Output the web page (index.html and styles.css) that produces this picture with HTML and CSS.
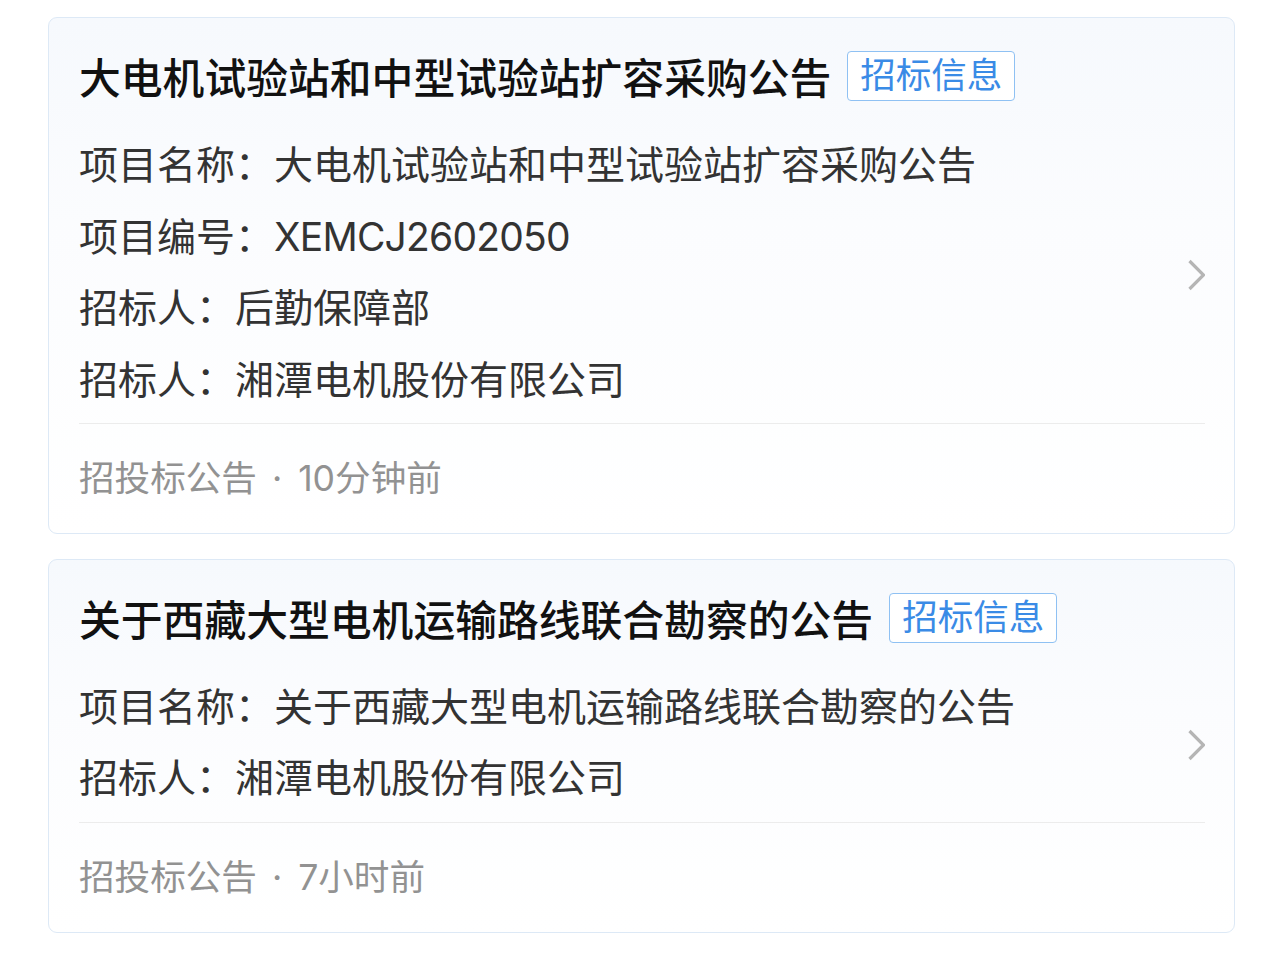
FILE: index.html
```html
<!DOCTYPE html>
<html lang="zh-CN">
<head>
<meta charset="utf-8">
<title>招投标公告</title>
<link rel="stylesheet" href="styles.css">
</head>
<body>
<div class="list">
  <div class="card">
    <div class="title-row">
      <span class="title">大电机试验站和中型试验站扩容采购公告</span>
      <span class="tag">招标信息</span>
    </div>
    <div class="body">
      <div class="rows">
        <div class="row">项目名称：大电机试验站和中型试验站扩容采购公告</div>
        <div class="row">项目编号：<span class="code">XEMCJ2602050</span></div>
        <div class="row">招标人：后勤保障部</div>
        <div class="row">招标人：湘潭电机股份有限公司</div>
      </div>
      <svg class="chev" width="20" height="32" viewBox="0 0 20 32"><path d="M4.5 2 L18.5 16 L4.5 30" fill="none" stroke="#b5b5b5" stroke-width="3.2"/></svg>
    </div>
    <div class="footer">招投标公告<span class="dot">·</span>10分钟前</div>
  </div>
  <div class="card">
    <div class="title-row">
      <span class="title">关于西藏大型电机运输路线联合勘察的公告</span>
      <span class="tag">招标信息</span>
    </div>
    <div class="body">
      <div class="rows">
        <div class="row">项目名称：关于西藏大型电机运输路线联合勘察的公告</div>
        <div class="row">招标人：湘潭电机股份有限公司</div>
      </div>
      <svg class="chev" width="20" height="32" viewBox="0 0 20 32"><path d="M4.5 2 L18.5 16 L4.5 30" fill="none" stroke="#b5b5b5" stroke-width="3.2"/></svg>
    </div>
    <div class="footer">招投标公告<span class="dot">·</span>7小时前</div>
  </div>
</div>
</body>
</html>
```
FILE: styles.css
```css
html, body {
  margin: 0;
  padding: 0;
  background: #ffffff;
}
body {
  font-family: Inter, "Noto Sans CJK SC", sans-serif;
}
.list {
  display: flex;
  flex-direction: column;
  gap: 24.5px;
  padding: 17px 49px 0 48px;
}
.card {
  border: 1px solid #dde9f6;
  border-radius: 9px;
  background: linear-gradient(180deg, #f6f9fd 0%, #fbfcfe 40%, #ffffff 100%);
  padding: 0 29px 0 30px;
}
.title-row {
  display: flex;
  align-items: center;
  gap: 16px;
  padding-top: 28px;
  height: 60px;
}
.title {
  font-size: 41.8px;
  font-weight: 500;
  color: #111111;
  line-height: 60px;
  white-space: nowrap;
  position: relative;
  top: 3px;
}
.tag {
  font-size: 35.5px;
  line-height: 48px;
  color: #3a8be6;
  border: 1px solid #8fc1f3;
  border-radius: 4px;
  padding: 0 12px;
  background: #ffffff;
  white-space: nowrap;
}
.body {
  display: flex;
  align-items: center;
  justify-content: space-between;
  padding-top: 23px;
  padding-bottom: 8px;
  border-bottom: 1px solid #ececec;
}
.rows {
  display: flex;
  flex-direction: column;
}
.row {
  font-size: 39px;
  line-height: 71.6px;
  color: #333333;
  white-space: nowrap;
}
.code {
  letter-spacing: -0.8px;
}
.chev {
  display: block;
  margin-top: 6px;
}
.footer {
  font-size: 35.6px;
  line-height: 50px;
  color: #929292;
  padding-top: 30px;
  padding-bottom: 29px;
}
.dot {
  display: inline-block;
  margin: 0 16px 0 15px;
}
```
